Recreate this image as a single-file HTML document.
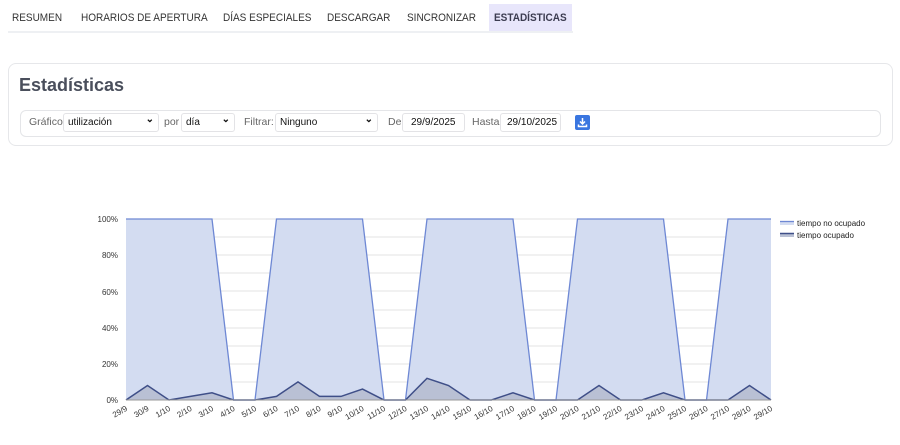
<!DOCTYPE html>
<html><head><meta charset="utf-8"><style>
body{margin:0;width:900px;height:445px;background:#fff;font-family:"Liberation Sans",sans-serif;position:relative;overflow:hidden}
.t{position:absolute;top:12px;font-size:11px;color:#333;white-space:nowrap;transform:scaleX(0.91);transform-origin:0 0}
.act{position:absolute;left:489px;top:4px;width:83px;height:28px;background:#e8e6fb}
.tabline{position:absolute;left:8px;top:31px;width:565px;height:2px;background:#eef0f3}
.card{position:absolute;left:8px;top:63px;width:885px;height:83px;border:1px solid #e6e7ea;border-radius:8px;box-sizing:border-box}
h1{position:absolute;left:19px;top:75px;margin:0;font-size:18px;font-weight:bold;color:#4a4f5c}
.bar{position:absolute;left:20px;top:110px;width:861px;height:27px;border:1px solid #e4e5e8;border-radius:6px;box-sizing:border-box;font-size:10.5px;color:#666}
.bar span,.bar .s{position:absolute;top:5px;white-space:nowrap}
.s{border:1px solid #e3e3e6;border-radius:3px;height:19px;top:2px!important;box-sizing:border-box;color:#111;padding:3px 4px;font-size:10px}
.s i{position:absolute;right:4px;top:0px;font-style:normal;font-size:10px;font-weight:bold}
</style></head><body>
<div class="act"></div>
<div class="tabline"></div>
<div class="t" style="left:12px">RESUMEN</div>
<div class="t" style="left:81px">HORARIOS DE APERTURA</div>
<div class="t" style="left:223px">DÍAS ESPECIALES</div>
<div class="t" style="left:327px">DESCARGAR</div>
<div class="t" style="left:407px">SINCRONIZAR</div>
<div class="t" style="left:494px;font-weight:bold;color:#3c3c50">ESTADÍSTICAS</div>
<div class="card"></div>
<h1>Estadísticas</h1>
<div class="bar">
<span style="left:8px">Gráfico</span>
<div class="s" style="left:42px;width:96px">utilización<i>⌄</i></div>
<span style="left:143px">por</span>
<div class="s" style="left:160px;width:54px">día<i>⌄</i></div>
<span style="left:223px">Filtrar:</span>
<div class="s" style="left:254px;width:103px">Ninguno<i>⌄</i></div>
<span style="left:367px">De</span>
<div class="s" style="left:381px;width:63px;padding-left:8px">29/9/2025</div>
<span style="left:451px">Hasta</span>
<div class="s" style="left:479px;width:61px;padding-left:6px">29/10/2025</div>
<svg style="position:absolute;left:554px;top:4px" width="15" height="15" viewBox="0 0 15 15"><rect width="15" height="15" rx="2" fill="#3a76e0"/><path d="M7.5 3v6M5 6.5l2.5 2.5 2.5-2.5M3.5 9.5v2h8v-2" stroke="#fff" stroke-width="1.5" fill="none"/></svg>
</div>
<svg style="position:absolute;left:0;top:0" width="900" height="445">
<g stroke="#e3e3e3" stroke-width="1">
<line x1="126" x2="771" y1="219" y2="219"/><line x1="126" x2="771" y1="237" y2="237"/><line x1="126" x2="771" y1="255" y2="255"/><line x1="126" x2="771" y1="273" y2="273"/><line x1="126" x2="771" y1="291" y2="291"/><line x1="126" x2="771" y1="310" y2="310"/><line x1="126" x2="771" y1="328" y2="328"/><line x1="126" x2="771" y1="346" y2="346"/><line x1="126" x2="771" y1="364" y2="364"/><line x1="126" x2="771" y1="382" y2="382"/>
</g>
<polygon fill="#d3dcf1" points="126,219 212,219 233.5,400 255,400 276.5,219 362.5,219 384,400 405.5,400 427,219 513,219 534.5,400 556,400 577.5,219 663.5,219 685,400 706.5,400 728,219 771,219 771,400 126,400"/>
<polyline fill="none" stroke="#6e88d4" stroke-width="1.3" points="126,219 212,219 233.5,400 255,400 276.5,219 362.5,219 384,400 405.5,400 427,219 513,219 534.5,400 556,400 577.5,219 663.5,219 685,400 706.5,400 728,219 771,219"/>
<polygon fill="#b9c0d4" points="126,400 147.5,385.5 169,400 190.5,396.4 212,392.8 233.5,400 255,400 276.5,396.4 298,381.9 319.5,396.4 341,396.4 362.5,389.1 384,400 405.5,400 427,378.3 448.5,385.5 470,400 491.5,400 513,392.8 534.5,400 556,400 577.5,400 599,385.5 620.5,400 642,400 663.5,392.8 685,400 706.5,400 728,400 749.5,385.5 771,400"/>
<polyline fill="none" stroke="#3f4f88" stroke-width="1.5" points="126,400 147.5,385.5 169,400 190.5,396.4 212,392.8 233.5,400 255,400 276.5,396.4 298,381.9 319.5,396.4 341,396.4 362.5,389.1 384,400 405.5,400 427,378.3 448.5,385.5 470,400 491.5,400 513,392.8 534.5,400 556,400 577.5,400 599,385.5 620.5,400 642,400 663.5,392.8 685,400 706.5,400 728,400 749.5,385.5 771,400"/>
<line x1="126" x2="771" y1="400" y2="400" stroke="#999" stroke-width="1"/>
<g font-size="8" fill="#333" text-anchor="end">
<text x="118" y="222">100%</text><text x="118" y="258">80%</text><text x="118" y="295">60%</text><text x="118" y="331">40%</text><text x="118" y="367">20%</text><text x="118" y="403">0%</text>
</g>
<g font-size="8" fill="#333" text-anchor="end">
<text transform="translate(128,410) rotate(-30)">29/9</text><text transform="translate(149.5,410) rotate(-30)">30/9</text><text transform="translate(171,410) rotate(-30)">1/10</text><text transform="translate(192.5,410) rotate(-30)">2/10</text><text transform="translate(214,410) rotate(-30)">3/10</text><text transform="translate(235.5,410) rotate(-30)">4/10</text><text transform="translate(257,410) rotate(-30)">5/10</text><text transform="translate(278.5,410) rotate(-30)">6/10</text><text transform="translate(300,410) rotate(-30)">7/10</text><text transform="translate(321.5,410) rotate(-30)">8/10</text><text transform="translate(343,410) rotate(-30)">9/10</text><text transform="translate(364.5,410) rotate(-30)">10/10</text><text transform="translate(386,410) rotate(-30)">11/10</text><text transform="translate(407.5,410) rotate(-30)">12/10</text><text transform="translate(429,410) rotate(-30)">13/10</text><text transform="translate(450.5,410) rotate(-30)">14/10</text><text transform="translate(472,410) rotate(-30)">15/10</text><text transform="translate(493.5,410) rotate(-30)">16/10</text><text transform="translate(515,410) rotate(-30)">17/10</text><text transform="translate(536.5,410) rotate(-30)">18/10</text><text transform="translate(558,410) rotate(-30)">19/10</text><text transform="translate(579.5,410) rotate(-30)">20/10</text><text transform="translate(601,410) rotate(-30)">21/10</text><text transform="translate(622.5,410) rotate(-30)">22/10</text><text transform="translate(644,410) rotate(-30)">23/10</text><text transform="translate(665.5,410) rotate(-30)">24/10</text><text transform="translate(687,410) rotate(-30)">25/10</text><text transform="translate(708.5,410) rotate(-30)">26/10</text><text transform="translate(730,410) rotate(-30)">27/10</text><text transform="translate(751.5,410) rotate(-30)">28/10</text><text transform="translate(773,410) rotate(-30)">29/10</text>
</g>
<rect x="780" y="221" width="14" height="4" fill="#d3dcf1"/><line x1="780" x2="794" y1="221.5" y2="221.5" stroke="#6e88d4" stroke-width="1.3"/>
<rect x="780" y="233" width="14" height="4" fill="#b9c0d4"/><line x1="780" x2="794" y1="233.5" y2="233.5" stroke="#3f4f88" stroke-width="1.5"/>
<text x="797" y="226" font-size="8" fill="#222">tiempo no ocupado</text>
<text x="797" y="238" font-size="8" fill="#222">tiempo ocupado</text>
</svg>
</body></html>
